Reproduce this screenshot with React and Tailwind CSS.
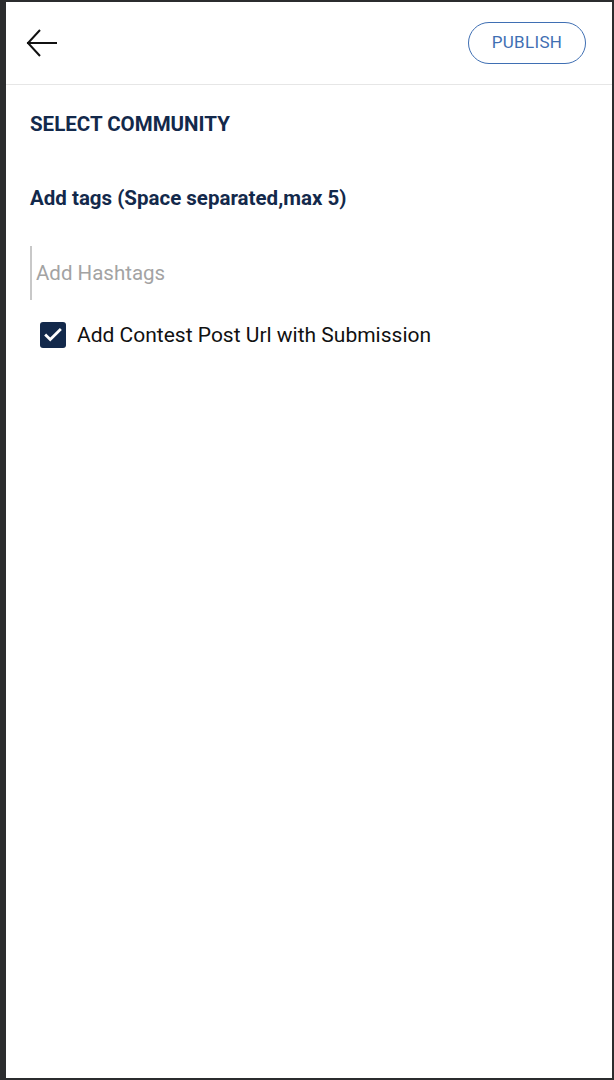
import React from 'react';

const BackArrow = () => (
  <svg width="32" height="32" viewBox="0 0 32 32" fill="none" stroke="#111" strokeWidth="2" strokeLinecap="square">
    <path d="M30 16H2" />
    <path d="M14 3L2 16l12 13" strokeLinecap="butt" />
  </svg>
);

const App = () => {
  return (
    <div className="h-[1080px] w-[614px] bg-[#2b2c2e] pl-[6px] pr-[2px] py-[2px] font-['Roboto',sans-serif]">
      <div className="flex h-full flex-col bg-white">
        {/* Header */}
        <div className="flex h-[83px] items-center justify-between border-b border-[#e6e6e6] pl-[20px] pr-[26px]">
          <button className="flex h-[32px] w-[32px] items-center justify-center">
            <BackArrow />
          </button>
          <button className="h-[42px] w-[118px] rounded-full border-[1.5px] border-[#3f6fb3] text-[17px] tracking-[0.3px] text-[#3f6fb3]">
            PUBLISH
          </button>
        </div>

        {/* Body */}
        <div className="flex flex-col pl-[24px] pr-[24px]">
          <h2 className="mt-[27px] text-[20.5px] font-bold leading-[24px] text-[#13294b]">SELECT COMMUNITY</h2>
          <h3 className="mt-[49px] text-[20.5px] font-bold leading-[26px] text-[#13294b]">Add tags (Space separated,max 5)</h3>
          <div className="mt-[35px] flex h-[54px] items-center border-l-2 border-[#c8c8c8] pl-[4px]">
            <input
              className="w-full bg-transparent text-[20.5px] text-[#333] outline-none placeholder:text-[#a3a3a3]"
              placeholder="Add Hashtags"
            />
          </div>
          <label className="mt-[22px] ml-[10px] flex items-center gap-[11px]">
            <span className="flex h-[26px] w-[26px] items-center justify-center rounded-[3px] bg-[#13294b]">
              <svg width="22" height="22" viewBox="0 0 24 24" fill="none" stroke="#fff" strokeWidth="3" strokeLinecap="square" strokeLinejoin="miter">
                <path d="M4.5 12.5l4.5 4.5L19.5 6.5" />
              </svg>
            </span>
            <span className="text-[21px] leading-[26px] text-[#111]">Add Contest Post Url with Submission</span>
          </label>
        </div>
      </div>
    </div>
  );
};

export default App;
